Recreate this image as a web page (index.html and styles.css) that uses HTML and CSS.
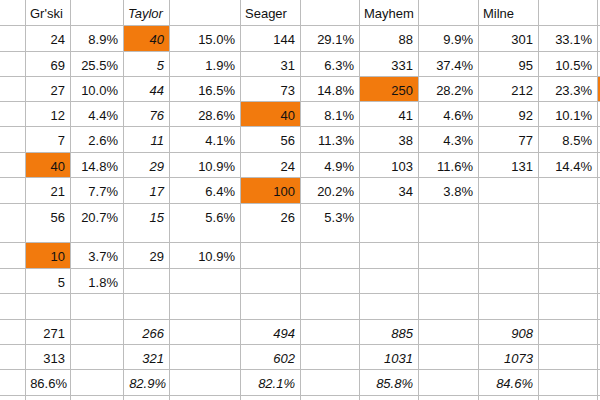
FILE: index.html
```html
<!DOCTYPE html>
<html>
<head>
<meta charset="utf-8">
<link rel="stylesheet" href="styles.css">
</head>
<body>
<div class="sheet">
  <!-- header -->
  <div class="c"></div><div class="c h">Gr'ski</div><div class="c"></div><div class="c h i">Taylor</div><div class="c"></div><div class="c h">Seager</div><div class="c"></div><div class="c h">Mayhem</div><div class="c"></div><div class="c h">Milne</div><div class="c"></div><div class="c"></div>
  <!-- row 1 -->
  <div class="c"></div><div class="c">24</div><div class="c">8.9%</div><div class="c i o">40</div><div class="c">15.0%</div><div class="c">144</div><div class="c">29.1%</div><div class="c">88</div><div class="c">9.9%</div><div class="c">301</div><div class="c">33.1%</div><div class="c"></div>
  <!-- row 2 -->
  <div class="c"></div><div class="c">69</div><div class="c">25.5%</div><div class="c i">5</div><div class="c">1.9%</div><div class="c">31</div><div class="c">6.3%</div><div class="c">331</div><div class="c">37.4%</div><div class="c">95</div><div class="c">10.5%</div><div class="c"></div>
  <!-- row 3 -->
  <div class="c"></div><div class="c">27</div><div class="c">10.0%</div><div class="c i">44</div><div class="c">16.5%</div><div class="c">73</div><div class="c">14.8%</div><div class="c o">250</div><div class="c">28.2%</div><div class="c">212</div><div class="c">23.3%</div><div class="c o"></div>
  <!-- row 4 -->
  <div class="c"></div><div class="c">12</div><div class="c">4.4%</div><div class="c i">76</div><div class="c">28.6%</div><div class="c o">40</div><div class="c">8.1%</div><div class="c">41</div><div class="c">4.6%</div><div class="c">92</div><div class="c">10.1%</div><div class="c"></div>
  <!-- row 5 -->
  <div class="c"></div><div class="c">7</div><div class="c">2.6%</div><div class="c i">11</div><div class="c">4.1%</div><div class="c">56</div><div class="c">11.3%</div><div class="c">38</div><div class="c">4.3%</div><div class="c">77</div><div class="c">8.5%</div><div class="c"></div>
  <!-- row 6 -->
  <div class="c"></div><div class="c o">40</div><div class="c">14.8%</div><div class="c i">29</div><div class="c">10.9%</div><div class="c">24</div><div class="c">4.9%</div><div class="c">103</div><div class="c">11.6%</div><div class="c">131</div><div class="c">14.4%</div><div class="c"></div>
  <!-- row 7 -->
  <div class="c"></div><div class="c">21</div><div class="c">7.7%</div><div class="c i">17</div><div class="c">6.4%</div><div class="c o">100</div><div class="c">20.2%</div><div class="c">34</div><div class="c">3.8%</div><div class="c"></div><div class="c"></div><div class="c"></div>
  <!-- row 8 (tall) -->
  <div class="c"></div><div class="c">56</div><div class="c">20.7%</div><div class="c i">15</div><div class="c">5.6%</div><div class="c">26</div><div class="c">5.3%</div><div class="c"></div><div class="c"></div><div class="c"></div><div class="c"></div><div class="c"></div>
  <!-- row 9 -->
  <div class="c"></div><div class="c o">10</div><div class="c">3.7%</div><div class="c">29</div><div class="c">10.9%</div><div class="c"></div><div class="c"></div><div class="c"></div><div class="c"></div><div class="c"></div><div class="c"></div><div class="c"></div>
  <!-- row 10 -->
  <div class="c"></div><div class="c">5</div><div class="c">1.8%</div><div class="c"></div><div class="c"></div><div class="c"></div><div class="c"></div><div class="c"></div><div class="c"></div><div class="c"></div><div class="c"></div><div class="c"></div>
  <!-- row 11 (empty) -->
  <div class="c"></div><div class="c"></div><div class="c"></div><div class="c"></div><div class="c"></div><div class="c"></div><div class="c"></div><div class="c"></div><div class="c"></div><div class="c"></div><div class="c"></div><div class="c"></div>
  <!-- row 12 totals -->
  <div class="c"></div><div class="c">271</div><div class="c"></div><div class="c i">266</div><div class="c"></div><div class="c i">494</div><div class="c"></div><div class="c i">885</div><div class="c"></div><div class="c i">908</div><div class="c"></div><div class="c"></div>
  <!-- row 13 -->
  <div class="c"></div><div class="c">313</div><div class="c"></div><div class="c i">321</div><div class="c"></div><div class="c i">602</div><div class="c"></div><div class="c i">1031</div><div class="c"></div><div class="c i">1073</div><div class="c"></div><div class="c"></div>
  <!-- row 14 -->
  <div class="c"></div><div class="c wide">86.6%</div><div class="c"></div><div class="c i wide">82.9%</div><div class="c"></div><div class="c i">82.1%</div><div class="c"></div><div class="c i">85.8%</div><div class="c"></div><div class="c i">84.6%</div><div class="c"></div><div class="c"></div>
  <!-- row 15 (partial) -->
  <div class="c"></div><div class="c"></div><div class="c"></div><div class="c"></div><div class="c"></div><div class="c"></div><div class="c"></div><div class="c"></div><div class="c"></div><div class="c"></div><div class="c"></div><div class="c"></div>
</div>
</body>
</html>
```

FILE: styles.css
```css
html, body {
  margin: 0;
  padding: 0;
  background: #ffffff;
}

body {
  width: 600px;
  height: 400px;
  overflow: hidden;
  font-family: "Liberation Sans", Arial, Helvetica, sans-serif;
  font-size: 13px;
  color: #111111;
}

.sheet {
  display: grid;
  grid-template-columns: 26px 45px 53px 46px 71px 60px 59px 59px 60px 60px 59px 1fr;
  grid-template-rows: 26px 26px 25px 25px 25px 26px 25px 26px 39px 26px 25px 26px 25px 25px 26px 10px;
  width: 600px;
}

.c {
  box-sizing: border-box;
  border-right: 1px solid #bcbcbc;
  border-bottom: 1px solid #bcbcbc;
  padding: 4px 5px 0 4px;
  line-height: 20px;
  text-align: right;
  white-space: nowrap;
  overflow: visible;
}

.h {
  text-align: left;
}

.i {
  font-style: italic;
}

.o {
  background: #f27a0d;
}

.wide {
  padding-right: 3px;
}
```
